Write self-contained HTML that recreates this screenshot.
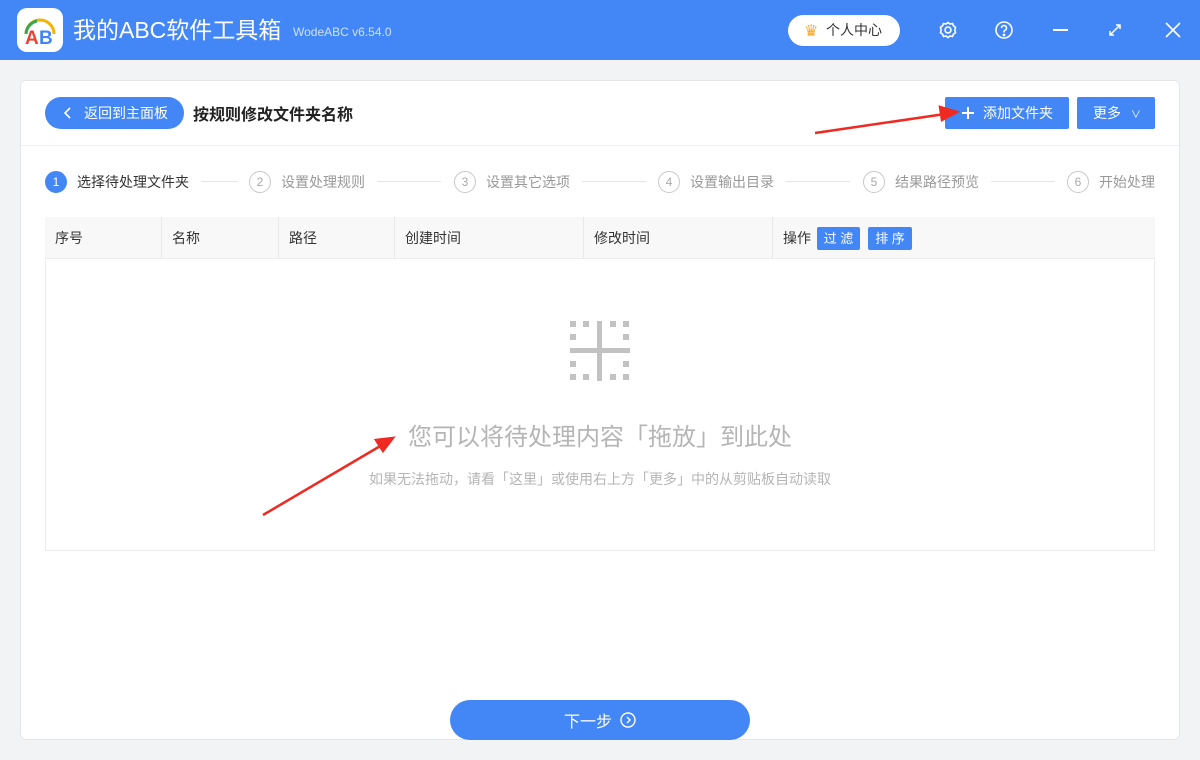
<!DOCTYPE html>
<html><head><meta charset="utf-8"><style>
*{margin:0;padding:0;box-sizing:border-box}
body{width:1200px;height:760px;background:#f2f3f5;font-family:"Liberation Sans","Noto Sans CJK SC",sans-serif;position:relative;overflow:hidden}
.tb{position:absolute;left:0;top:0;width:1200px;height:60px;background:#4287f5}
.abs{position:absolute}
.panel{position:absolute;left:20px;top:80px;width:1160px;height:660px;background:#fff;border:1px solid #e6e6e6;border-radius:6px}
.step{position:absolute;top:171px;font-size:14px;color:#999;display:flex;align-items:center}
.step i{display:inline-block;width:22px;height:22px;border:1px solid #c8c8c8;border-radius:50%;font-style:normal;font-size:12px;text-align:center;line-height:20px;color:#aaa;margin-right:10px}
.line{position:absolute;top:181px;height:1px;background:#e5e5e5}
.th{position:absolute;top:217px;height:42px;line-height:42px;font-size:14px;color:#333;padding-left:10px;border-right:1px solid #e8e8e8}
</style></head><body>
<div class="tb"></div>
<div class="abs" style="left:17px;top:8px;width:46px;height:44px;background:#fff;border-radius:10px"></div>
<svg class="abs" style="left:17px;top:8px" width="46" height="44"><path d="M9 26 A14 14 0 0 1 37 26" fill="none" stroke="#f4b400" stroke-width="3"/><path d="M9 26 A14 14 0 0 1 20 13" fill="none" stroke="#34a853" stroke-width="3"/><text x="8" y="36" font-size="19" font-weight="bold" fill="#ea4335" font-family="Liberation Sans">A</text><text x="22" y="36" font-size="19" font-weight="bold" fill="#4285f4" font-family="Liberation Sans">B</text></svg>
<div class="abs" style="left:73px;top:15px;font-size:23px;color:#fff;line-height:30px">我的ABC软件工具箱</div>
<div class="abs" style="left:293px;top:25px;font-size:12px;color:#cfe0fb">WodeABC v6.54.0</div>
<div class="abs" style="left:788px;top:15px;width:112px;height:31px;background:#fff;border-radius:16px;font-size:14px;line-height:31px;padding-left:38px;color:#333">个人中心</div>
<div class="abs" style="left:804px;top:21px;font-size:16px;color:#f5a623">♛</div>
<svg class="abs" style="left:938px;top:20px" width="20" height="20" fill="none" stroke="#fff" stroke-width="1.6"><circle cx="10" cy="10" r="3"/><path d="M10 2.5l2 1.5 2.5-.5 1 2.3 2 1.5-.6 2.7.6 2.7-2 1.5-1 2.3-2.5-.5-2 1.5-2-1.5-2.5.5-1-2.3-2-1.5.6-2.7-.6-2.7 2-1.5 1-2.3 2.5.5z"/></svg>
<svg class="abs" style="left:994px;top:20px" width="20" height="20" fill="none" stroke="#fff" stroke-width="1.6"><circle cx="10" cy="10" r="8"/><path d="M7.5 8a2.5 2.5 0 1 1 3.5 2.3c-.7.3-1 .8-1 1.5v.7"/><circle cx="10" cy="15" r=".6" fill="#fff"/></svg>
<div class="abs" style="left:1053px;top:29px;width:15px;height:2px;background:#fff"></div>
<svg class="abs" style="left:1108px;top:23px" width="14" height="14" stroke="#fff" stroke-width="1.5" fill="none"><path d="M2 12L12 2M8 2h4v4M2 8v4h4"/></svg>
<svg class="abs" style="left:1165px;top:22px" width="16" height="16" stroke="#fff" stroke-width="1.6"><path d="M1 1L15 15M15 1L1 15"/></svg>
<div class="panel"></div>
<div class="abs" style="left:45px;top:97px;width:139px;height:32px;background:#4287f5;border-radius:16px;color:#fff;font-size:14px;line-height:32px;padding-left:39px">返回到主面板</div>
<svg class="abs" style="left:63px;top:106px" width="10" height="14" stroke="#fff" stroke-width="1.6" fill="none"><path d="M7 2L2 7l5 5"/></svg>
<div class="abs" style="left:193px;top:101px;font-size:16px;color:#222;font-weight:bold">按规则修改文件夹名称</div>
<div class="abs" style="left:945px;top:97px;width:124px;height:32px;background:#4287f5;border-radius:2px;color:#fff;font-size:14px;line-height:32px;padding-left:38px">添加文件夹</div>
<svg class="abs" style="left:961px;top:106px" width="14" height="14" stroke="#fff" stroke-width="2"><path d="M7 1v12M1 7h12"/></svg>
<div class="abs" style="left:1077px;top:97px;width:78px;height:32px;background:#4287f5;border-radius:2px;color:#fff;font-size:14px;line-height:32px;padding-left:16px">更多 <span style="font-size:10px;margin-left:6px">∨</span></div>
<div class="abs" style="left:21px;top:145px;width:1158px;height:1px;background:#eee"></div>
<div class="step" style="left:45px;color:#333"><i style="background:#4287f5;border-color:#4287f5;color:#fff">1</i>选择待处理文件夹</div>
<div class="line" style="left:201px;width:36px"></div>
<div class="step" style="left:249px"><i>2</i>设置处理规则</div>
<div class="line" style="left:377px;width:64px"></div>
<div class="step" style="left:454px"><i>3</i>设置其它选项</div>
<div class="line" style="left:582px;width:64px"></div>
<div class="step" style="left:658px"><i>4</i>设置输出目录</div>
<div class="line" style="left:786px;width:64px"></div>
<div class="step" style="left:863px"><i>5</i>结果路径预览</div>
<div class="line" style="left:991px;width:64px"></div>
<div class="step" style="left:1067px"><i>6</i>开始处理</div>
<div class="abs" style="left:45px;top:217px;width:1110px;height:334px;border:1px solid #ececec"></div>
<div class="abs" style="left:45px;top:217px;width:1110px;height:42px;background:#f8f8f8;border-bottom:1px solid #ececec"></div>
<div class="th" style="left:45px;width:117px">序号</div>
<div class="th" style="left:162px;width:117px">名称</div>
<div class="th" style="left:279px;width:116px">路径</div>
<div class="th" style="left:395px;width:189px">创建时间</div>
<div class="th" style="left:584px;width:189px">修改时间</div>
<div class="th" style="left:773px;width:200px;border:none">操作</div>
<div class="abs" style="left:817px;top:227px;width:43px;height:23px;background:#4287f5;color:#fff;font-size:13px;line-height:23px;text-align:center;border-radius:2px">过 滤</div>
<div class="abs" style="left:868px;top:227px;width:44px;height:23px;background:#4287f5;color:#fff;font-size:13px;line-height:23px;text-align:center;border-radius:2px">排 序</div>
<svg class="abs" style="left:570px;top:321px" width="60" height="60" fill="#c2c2c2"><rect x="0" y="0" width="6" height="6"/><rect x="13" y="0" width="6" height="6"/><rect x="40" y="0" width="6" height="6"/><rect x="53" y="0" width="6" height="6"/><rect x="0" y="13" width="6" height="6"/><rect x="53" y="13" width="6" height="6"/><rect x="0" y="40" width="6" height="6"/><rect x="53" y="40" width="6" height="6"/><rect x="0" y="53" width="6" height="6"/><rect x="13" y="53" width="6" height="6"/><rect x="40" y="53" width="6" height="6"/><rect x="53" y="53" width="6" height="6"/><rect x="27" y="0" width="5" height="60"/><rect x="0" y="27" width="60" height="5"/></svg>
<div class="abs" style="left:0;width:1200px;top:417px;text-align:center;font-size:24px;color:#b5b5b5">您可以将待处理内容「拖放」到此处</div>
<div class="abs" style="left:0;width:1200px;top:469px;text-align:center;font-size:14px;color:#b5b5b5">如果无法拖动，请看「这里」或使用右上方「更多」中的从剪贴板自动读取</div>
<div class="abs" style="left:450px;top:700px;width:300px;height:40px;background:#4287f5;border-radius:20px;color:#fff;font-size:16px;display:flex;align-items:center;justify-content:center;gap:8px">下一步 <svg width="16" height="16" fill="none" stroke="#fff" stroke-width="1.4"><circle cx="8" cy="8" r="7"/><path d="M7 5l3 3-3 3"/></svg></div>
<svg class="abs" style="left:0;top:0" width="1200" height="760"><g stroke="#ee2a22" stroke-width="2.5" fill="#ee2a22"><line x1="815" y1="133" x2="945" y2="114"/><path d="M957 112L940 107L942 120Z"/><line x1="263" y1="515" x2="382" y2="445"/><path d="M393 438L376 440L383 451Z"/></g></svg>
</body></html>
